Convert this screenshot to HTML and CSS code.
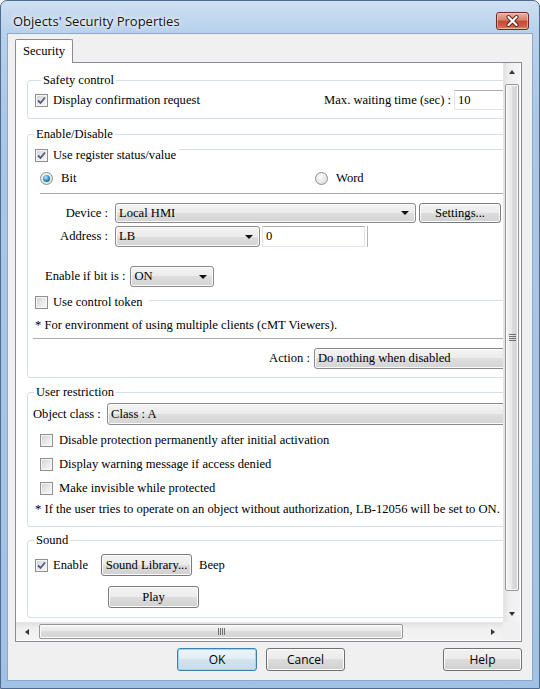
FILE: index.html
```html
<!DOCTYPE html>
<html lang="en">
  <head>
    <meta charset="UTF-8" />
    <title>Objects' Security Properties</title>
    <link rel="stylesheet" href="styles.css">
  </head>

  <body>
    <div class="window">
      <div class="titlebar">
        <span class="title">Objects' Security Properties</span>
        <button class="close" aria-label="Close">
          <svg viewBox="0 0 33 18" width="33" height="18">
            <path d="M12.5 5 L20.5 13 M20.5 5 L12.5 13" stroke="#5a1d15" stroke-width="4" stroke-linecap="round" />
            <path d="M12.5 5 L20.5 13 M20.5 5 L12.5 13" stroke="#fff" stroke-width="2.2" stroke-linecap="round" />
          </svg>
        </button>
      </div>

      <div class="client">
        <div class="tabs">
          <div class="tab active">Security</div>
        </div>

        <div class="panel">
          <div class="scroller">
            <div class="viewport">
              <div class="content">
                <!-- Safety control -->
                <fieldset class="group safety">
                  <legend>Safety control</legend>
                  <div class="row safety-row">
                    <span class="check">
                      <span class="box"><svg viewBox="0 0 11 11"><path d="M2 5.5 L4.5 8 L9 2.5" /></svg></span>
                      <span>Display confirmation request</span>
                    </span>
                    <span class="wait-label">Max. waiting time (sec) :</span>
                    <input class="text wait" type="text" value="10" />
                  </div>
                </fieldset>

                <!-- Enable/Disable -->
                <fieldset class="group enable">
                  <legend>Enable/Disable</legend>
                  <div class="row titled register">
                    <span class="check">
                      <span class="box"><svg viewBox="0 0 11 11"><path d="M2 5.5 L4.5 8 L9 2.5" /></svg></span>
                      <span>Use register status/value</span>
                    </span>
                    <span class="rule"></span>
                  </div>
                  <div class="row radios">
                    <span class="opt bit"><span class="radio on"></span>Bit</span>
                    <span class="opt"><span class="radio"></span>Word</span>
                  </div>
                  <div class="sep sep-device"></div>
                  <div class="row device">
                    <span class="lbl">Device :</span>
                    <div class="combo device-combo"><span>Local HMI</span><i class="arrow"></i></div>
                    <button class="btn settings">Settings...</button>
                  </div>
                  <div class="row address">
                    <span class="lbl">Address :</span>
                    <div class="combo addr-combo"><span>LB</span><i class="arrow"></i></div>
                    <input class="text addr" type="text" value="0" />
                    <span class="stub"></span>
                  </div>
                  <div class="row bitstate">
                    <span class="bit-label">Enable if bit is :</span>
                    <div class="combo on-combo"><span>ON</span><i class="arrow"></i></div>
                  </div>
                  <div class="row titled token">
                    <span class="check">
                      <span class="box"></span>
                      <span>Use control token</span>
                    </span>
                    <span class="rule"></span>
                  </div>
                  <p class="note">* For environment of using multiple clients (cMT Viewers).</p>
                  <div class="sep sep-action"></div>
                  <div class="row action">
                    <span class="action-label">Action :</span>
                    <div class="combo action-combo"><span>Do nothing when disabled</span><i class="arrow"></i></div>
                  </div>
                </fieldset>

                <!-- User restriction -->
                <fieldset class="group user">
                  <legend>User restriction</legend>
                  <div class="row object">
                    <span class="object-label">Object class :</span>
                    <div class="combo object-combo"><span>Class : A</span><i class="arrow"></i></div>
                  </div>
                  <div class="row option">
                    <span class="check"><span class="box"></span><span>Disable protection permanently after initial activation</span></span>
                  </div>
                  <div class="row option">
                    <span class="check"><span class="box"></span><span>Display warning message if access denied</span></span>
                  </div>
                  <div class="row option">
                    <span class="check"><span class="box"></span><span>Make invisible while protected</span></span>
                  </div>
                  <p class="note user-note">* If the user tries to operate on an object without authorization, LB-12056 will be set to ON.</p>
                </fieldset>

                <!-- Sound -->
                <fieldset class="group sound">
                  <legend>Sound</legend>
                  <div class="row sound-row">
                    <span class="check sound-check">
                      <span class="box"><svg viewBox="0 0 11 11"><path d="M2 5.5 L4.5 8 L9 2.5" /></svg></span>
                      <span>Enable</span>
                    </span>
                    <button class="btn sound-btn">Sound Library...</button>
                    <span class="beep">Beep</span>
                  </div>
                  <div class="row play-row">
                    <button class="btn sound-btn">Play</button>
                  </div>
                </fieldset>
              </div>
            </div>

            <div class="vscroll">
              <div class="sb-btn"><i class="tri up"></i></div>
              <div class="vtrack">
                <div class="vthumb"><span class="grip-h"></span></div>
              </div>
              <div class="sb-btn"><i class="tri down"></i></div>
            </div>

            <div class="hscroll">
              <div class="sb-btn left-btn"><i class="tri left"></i></div>
              <div class="htrack">
                <div class="hthumb"><span class="grip-v"></span></div>
              </div>
              <div class="sb-btn right-btn"><i class="tri right"></i></div>
            </div>

            <div class="corner"></div>
          </div>
        </div>

        <div class="actions">
          <button class="dlg-btn default">OK</button>
          <button class="dlg-btn">Cancel</button>
          <button class="dlg-btn help">Help</button>
        </div>
      </div>
    </div>
  </body>
</html>
```

FILE: styles.css
```css
* {
  margin: 0;
  padding: 0;
  box-sizing: border-box;
}

body {
  width: 540px;
  height: 689px;
  overflow: hidden;
  background: #fff;
  font-family: "Liberation Serif", serif;
  font-size: 12.6px;
  color: #000;
}

/* window frame */
.window {
  height: 689px;
  display: flex;
  flex-direction: column;
  padding: 0 7px 8px 7px;
  border: 1px solid #4e6a8c;
  border-radius: 7px 7px 0 0;
  background: linear-gradient(#cfe0f2, #b8d1ec 30px, #a9c7e7 120px, #a2c2e5);
}

.titlebar {
  height: 33px;
  display: flex;
  align-items: flex-start;
  flex: none;
}

.title {
  margin: 11px 0 0 5px;
  font-family: "Open Sans", sans-serif;
  font-size: 13px;
  line-height: 18px;
  color: #111;
  text-shadow: 0 0 6px #fff, 0 0 3px #fff;
}

.close {
  margin: 11px 3px 0 auto;
  width: 33px;
  height: 18px;
  border: 1px solid #6b2a22;
  border-radius: 3px;
  background: linear-gradient(#eab0a2, #d8816c 45%, #c24a32 50%, #d0604a 85%, #e4957f);
  box-shadow: inset 0 0 0 1px rgba(255, 220, 210, 0.5);
  display: flex;
  align-items: center;
  justify-content: center;
}

.close svg {
  display: block;
  margin: -1px;
}

.client {
  flex: 1;
  display: flex;
  flex-direction: column;
  padding: 5px 10px 0 7px;
  background: #f0f0f0;
  box-shadow: 0 0 0 1px #8ea9c8;
}

/* tab */
.tabs {
  display: flex;
  height: 24px;
  margin-bottom: -1px;
  position: relative;
  z-index: 1;
}

.tab {
  height: 24px;
  width: 58px;
  padding-left: 7px;
  border: 1px solid #898c95;
  border-bottom: none;
  border-radius: 2px 2px 0 0;
  background: #fff;
  line-height: 22px;
}

.panel {
  width: 507px;
  height: 580px;
  border: 1px solid #898c95;
  background: #fff;
  padding: 0 1px 1px 0;
}

.scroller {
  display: grid;
  grid-template-columns: 487px 17px;
  grid-template-rows: 559px 18px;
}

.viewport {
  overflow: hidden;
}

.content {
  width: 505px;
  padding-top: 10px;
}

/* group boxes */
.group {
  width: 494px;
  margin-left: 11px;
  border: 1px solid #d5dfe5;
  border-radius: 3px;
  padding: 0;
}

.group legend {
  margin-left: 6px;
  padding: 0 2px;
  line-height: 15px;
}

.safety {
  padding: 2px 8px 8px 7px;
}

.enable {
  margin-top: 8px;
  padding: 4px 0 8px 0;
}

.user {
  margin-top: 7px;
  padding: 3px 0 9px 0;
}

.sound {
  margin-top: 6px;
  padding: 6px 0 9px 0;
}

.row {
  display: flex;
  align-items: center;
  white-space: nowrap;
}

.check {
  display: flex;
  align-items: center;
  white-space: nowrap;
}

.check .box {
  margin-right: 5px;
}

.box {
  flex: none;
  width: 13px;
  height: 13px;
  border: 1px solid #8e8f8f;
  background: linear-gradient(135deg, #d0d0d0, #ececec 60%, #f8f8f8);
  box-shadow: inset 0 0 0 1px #f6f6f6;
}

.box svg {
  display: block;
  width: 11px;
  height: 11px;
}

.box path {
  fill: none;
  stroke: #4b5d82;
  stroke-width: 1.8;
}

.radio {
  flex: none;
  width: 13px;
  height: 13px;
  margin-right: 8px;
  border: 1px solid #8e8f8f;
  border-radius: 50%;
  background: radial-gradient(circle at 40% 35%, #fcfcfc, #d6d6d6);
  display: flex;
  align-items: center;
  justify-content: center;
}

.radio.on::after {
  content: "";
  width: 7px;
  height: 7px;
  border-radius: 50%;
  background: radial-gradient(circle at 40% 35%, #b8ecfb, #2b88b4 55%, #15466a);
}

.text {
  height: 20px;
  border: 1px solid #e0e4ea;
  border-top-color: #abadb3;
  padding-left: 3px;
  font-family: inherit;
  font-size: 12.6px;
  color: #000;
  background: #fff;
  outline: none;
}

.combo {
  flex: none;
  height: 21px;
  display: flex;
  align-items: center;
  padding: 0 6px 0 3px;
  border: 1px solid #8a8a8a;
  border-radius: 3px;
  background: linear-gradient(#f4f4f4, #ebebeb 50%, #dedede 50%, #d4d4d4);
  box-shadow: inset 0 0 0 1px #fafafa;
  overflow: hidden;
}

.combo span {
  flex: 1;
}

.arrow {
  width: 0;
  height: 0;
  border-left: 4px solid transparent;
  border-right: 4px solid transparent;
  border-top: 4px solid #111;
}

.btn {
  flex: none;
  height: 22px;
  border: 1px solid #7a7a7a;
  border-radius: 3px;
  background: linear-gradient(#f3f3f3, #ebebeb 50%, #dddddd 50%, #d0d0d0);
  box-shadow: inset 0 0 0 1px #fcfcfc;
  font-family: inherit;
  font-size: 12.6px;
  color: #000;
}

/* safety */
.safety-row {
  height: 20px;
}

.wait-label {
  margin-left: auto;
  margin-right: 3px;
}

.wait {
  width: 58px;
}

/* enable / disable */
.titled {
  height: 18px;
  padding-left: 7px;
}

.rule {
  flex: 1;
  align-self: flex-start;
  height: 1px;
  margin: 3px 0 0 3px;
  background: #d5dfe5;
}

.token {
  margin-top: 6px;
}

.token .rule {
  margin: 7px 0 0 6px;
}

.radios {
  height: 18px;
  margin-top: 5px;
  padding-left: 12px;
}

.opt {
  display: flex;
  align-items: center;
}

.opt.bit {
  width: 275px;
}

.sep {
  height: 1px;
  background: #a9a9a9;
}

.sep-device {
  margin: 6px 0 0 12px;
}

.lbl {
  flex: none;
  width: 80px;
  margin-right: 7px;
  text-align: right;
}

.device {
  margin-top: 9px;
}

.device-combo {
  width: 301px;
  height: 20px;
}

.settings {
  width: 82px;
  height: 20px;
  margin-left: 3px;
}

.address {
  margin-top: 3px;
}

.addr-combo {
  width: 145px;
}

.addr {
  width: 103px;
  height: 21px;
  margin-left: 2px;
}

.stub {
  width: 1px;
  height: 21px;
  margin-left: 2px;
  background: #b5b5b5;
}

.bitstate {
  margin-top: 19px;
  padding-left: 17px;
}

.bit-label {
  margin-right: 5px;
}

.on-combo {
  width: 84px;
}

.note {
  line-height: 16px;
  padding-left: 7px;
  white-space: nowrap;
}

.enable .note {
  margin-top: 6px;
}

.sep-action {
  margin: 5px 0 0 5px;
}

.action {
  margin-top: 9px;
}

.action-label {
  flex: none;
  width: 282px;
  margin-right: 4px;
  text-align: right;
}

.action-combo {
  width: 220px;
}

/* user restriction */
.object {
  padding-left: 5px;
}

.object-label {
  flex: none;
  width: 74px;
}

.object-combo {
  width: 425px;
  height: 22px;
}

.option {
  height: 18px;
  margin-top: 6px;
  padding-left: 12px;
}

.option .box {
  margin-right: 6px;
}

.user-note {
  margin-top: 4px;
}

/* sound */
.sound-check {
  flex: none;
  width: 73px;
  padding-left: 7px;
}

.sound-btn {
  width: 91px;
}

.beep {
  margin-left: 7px;
}

.play-row {
  margin-top: 10px;
  padding-left: 80px;
}

/* scrollbars */
.vscroll {
  display: flex;
  flex-direction: column;
  background: linear-gradient(90deg, #e2e2e2, #efefef 30%, #f4f4f4);
  border-left: 1px solid #e6e6e6;
}

.sb-btn {
  flex: none;
  height: 17px;
  display: flex;
  align-items: center;
  justify-content: center;
}

.vtrack {
  flex: 1;
  padding: 4px 1px 14px 1px;
}

.vthumb {
  height: 100%;
  border: 1px solid #979797;
  border-radius: 2px;
  background: linear-gradient(90deg, #f4f4f4, #e8e8e8 50%, #dcdcdc 50%, #d3d3d3);
  box-shadow: inset 0 0 0 1px #fbfbfb;
  display: flex;
  align-items: center;
  justify-content: center;
}

.grip-h {
  width: 7px;
  height: 7px;
  background: repeating-linear-gradient(#6e6e6e 0 1px, transparent 1px 2px);
}

.hscroll {
  display: flex;
  background: linear-gradient(#e2e2e2, #efefef 30%, #f4f4f4);
  border-top: 1px solid #e6e6e6;
}

.hscroll .sb-btn {
  height: auto;
}

.left-btn {
  width: 22px;
}

.right-btn {
  width: 21px;
}

.htrack {
  flex: 1;
  padding: 1px 79px 1px 1px;
}

.hthumb {
  height: 100%;
  border: 1px solid #979797;
  border-radius: 2px;
  background: linear-gradient(#f4f4f4, #e8e8e8 50%, #dcdcdc 50%, #d3d3d3);
  box-shadow: inset 0 0 0 1px #fbfbfb;
  display: flex;
  align-items: center;
  justify-content: center;
}

.grip-v {
  width: 7px;
  height: 7px;
  background: repeating-linear-gradient(90deg, #6e6e6e 0 1px, transparent 1px 2px);
}

.corner {
  background: #f0f0f0;
}

.tri {
  width: 0;
  height: 0;
  border: 3.5px solid transparent;
}

.tri.up {
  border-bottom: 4px solid #333;
  border-top-width: 0;
}

.tri.down {
  border-top: 4px solid #333;
  border-bottom-width: 0;
}

.tri.left {
  border-right: 4px solid #333;
  border-left-width: 0;
}

.tri.right {
  border-left: 4px solid #333;
  border-right-width: 0;
}

/* dialog buttons */
.actions {
  display: flex;
  justify-content: flex-end;
  margin-top: 6px;
  gap: 9px;
}

.dlg-btn {
  width: 79px;
  height: 23px;
  border: 1px solid #707070;
  border-radius: 3px;
  background: linear-gradient(#f2f2f2, #ebebeb 50%, #dddddd 50%, #cfcfcf);
  box-shadow: inset 0 0 0 1px #fcfcfc;
  font-family: "Open Sans", sans-serif;
  font-size: 12px;
  color: #000;
}

.dlg-btn.default {
  width: 80px;
  border-color: #3c7fb1;
  background: linear-gradient(#eef5f9, #e2edf4 50%, #d3e3ee 50%, #c9dce9);
  box-shadow: inset 0 0 0 1px #9fd6ee;
}

.dlg-btn.help {
  margin-left: 89px;
}
```
